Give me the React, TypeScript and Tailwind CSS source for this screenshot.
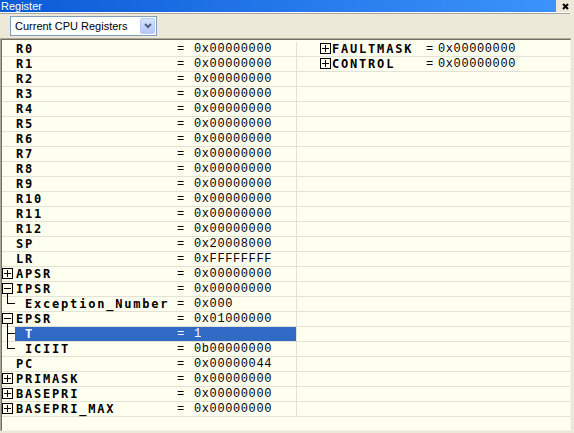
import React from 'react';

type Row = {
  name: string;
  value: string;
  kind?: 'plus' | 'minus';
  child?: 'mid' | 'last';
  selected?: boolean;
};

const zero = '0x00000000';

const leftRows: Row[] = [
  ...Array.from({ length: 13 }, (_, i) => ({ name: `R${i}`, value: zero })),
  { name: 'SP', value: '0x20008000' },
  { name: 'LR', value: '0xFFFFFFFF' },
  { name: 'APSR', value: zero, kind: 'plus' },
  { name: 'IPSR', value: zero, kind: 'minus' },
  { name: 'Exception_Number', value: '0x000', child: 'last' },
  { name: 'EPSR', value: '0x01000000', kind: 'minus' },
  { name: 'T', value: '1', child: 'mid', selected: true },
  { name: 'ICIIT', value: '0b00000000', child: 'last' },
  { name: 'PC', value: '0x00000044' },
  { name: 'PRIMASK', value: zero, kind: 'plus' },
  { name: 'BASEPRI', value: zero, kind: 'plus' },
  { name: 'BASEPRI_MAX', value: zero, kind: 'plus' },
];

const rightRows = [
  { name: 'FAULTMASK', value: zero },
  { name: 'CONTROL', value: zero },
];

const LINE = '#E2E1D3';

function ExpandBox({ kind }: { kind: 'plus' | 'minus' }) {
  return (
    <>
      <rect x={0.5} y={1.5} width={10} height={10} fill="none" stroke="#000" />
      <line x1={2} y1={6.5} x2={9} y2={6.5} stroke="#000" />
      {kind === 'plus' && <line x1={5.5} y1={3} x2={5.5} y2={10} stroke="#000" />}
    </>
  );
}

function Gutter({ row }: { row: Row }) {
  return (
    <svg width={13} height={15} className="shrink-0 block">
      <line x1={0} y1={14.5} x2={13} y2={14.5} stroke={LINE} />
      {row.kind && <ExpandBox kind={row.kind} />}
      {row.kind === 'minus' && <line x1={5.5} y1={12} x2={5.5} y2={15} stroke="#000" />}
      {row.child && (
        <>
          <line x1={5.5} y1={0} x2={5.5} y2={row.child === 'mid' ? 15 : 7} stroke="#000" />
          <line x1={5} y1={6.5} x2={13} y2={6.5} stroke="#000" />
        </>
      )}
    </svg>
  );
}

const nameFont = "font-['DejaVu_Sans_Mono',monospace] font-bold tracking-[1.8px]";

function LeftCell({ row }: { row: Row }) {
  const text = row.selected ? 'text-white' : 'text-black';
  return (
    <div className="flex w-[295px] h-[15px] shrink-0 border-r border-[#E2E1D3]">
      <Gutter row={row} />
      <div className={`flex flex-1 items-center h-[15px] border-b border-[#E2E1D3] ${row.selected ? 'bg-[#316AC5]' : ''}`}>
        <span className={`w-[162px] shrink-0 ${nameFont} ${row.child ? 'pl-[10px]' : 'pl-[1px]'} ${text}`}>
          {row.name}
        </span>
        <span className={`w-[17px] shrink-0 ${text}`}>=</span>
        <span className={`tracking-[0.6px] ${text}`}>{row.value}</span>
      </div>
    </div>
  );
}

function RightCell({ idx }: { idx: number }) {
  const r = rightRows[idx];
  return (
    <div className="flex flex-1 items-center h-[15px] border-b border-[#E2E1D3]">
      {r && (
        <>
          <svg width={12} height={14} className="ml-[23px] shrink-0 block">
            <ExpandBox kind="plus" />
          </svg>
          <span className={`w-[94px] shrink-0 ${nameFont} text-black`}>{r.name}</span>
          <span className="w-[12px] shrink-0 text-black">=</span>
          <span className="tracking-[0.6px] text-black">{r.value}</span>
        </>
      )}
    </div>
  );
}

export default function App() {
  return (
    <div className="w-[574px] h-[433px] bg-[#ECE9D8] overflow-hidden font-['Liberation_Sans',sans-serif]">
      <div className="flex h-[12px]">
        <div className="flex-1 bg-gradient-to-r from-[#0A5AD6] to-[#3C93FB] text-white text-[11px] leading-[12px] pl-[1px]">
          Register
        </div>
        <div className="w-[18px] flex items-center justify-center bg-[#ECE9D8]">
          <svg width={7} height={7} className="block">
            <path d="M1 1 L6 6 M6 1 L1 6" stroke="#000" strokeWidth={2} />
          </svg>
        </div>
      </div>
      <div className="h-px bg-white mr-[4px]" />
      <div className="h-px bg-[#ACA899] mr-[4px]" />

      <div className="h-[24px] pl-[10px] pt-[2px]">
        <div className="flex w-[147px] h-[20px] border border-[#7F9DB9] bg-white">
          <div className="flex-1 flex items-center pl-[4px] text-[11px] text-black">Current CPU Registers</div>
          <div className="w-[15px] m-px flex items-center justify-center rounded-[2px] bg-gradient-to-b from-[#D6E2FD] to-[#B4C8F6] border border-[#B9CBF3]">
            <svg width={8} height={6} className="block">
              <path d="M1 1 L4 4 L7 1" stroke="#4D6185" strokeWidth={2} fill="none" />
            </svg>
          </div>
        </div>
      </div>

      <div className="w-[571px] h-[393px] border-t border-l border-[#ACA899]">
        <div className="h-full border-t border-l border-[#716F64] border-r border-b border-r-[#F4F2E8] border-b-[#F4F2E8] bg-[#FFFFF0] pt-[2px] font-['Liberation_Mono',monospace] text-[12px] leading-[14px]">
          {leftRows.map((row, i) => (
            <div key={i} className="flex h-[15px]">
              <LeftCell row={row} />
              <RightCell idx={i} />
            </div>
          ))}
        </div>
      </div>
    </div>
  );
}
